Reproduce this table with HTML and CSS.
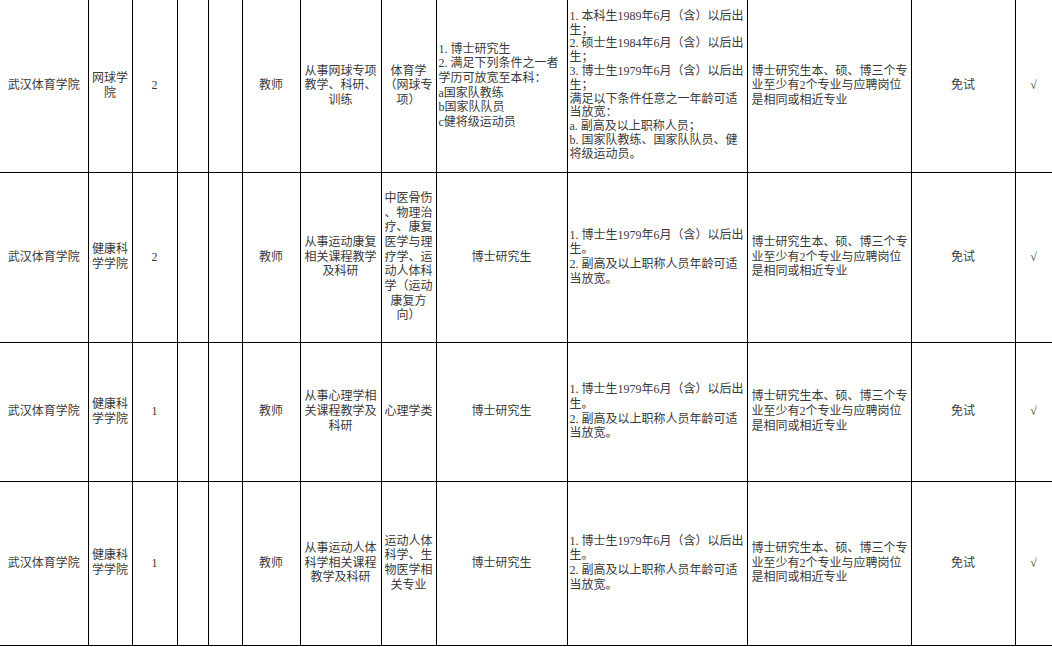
FILE: index.html
```html
<!DOCTYPE html>
<html lang="zh-CN">
<head>
<meta charset="utf-8">
<title>招聘岗位表</title>
<link rel="stylesheet" href="styles.css">
</head>
<body>
<table class="sheet">
  <colgroup>
    <col class="w88"><col class="w44"><col class="w45"><col class="w31"><col class="w34"><col class="w58"><col class="w81"><col class="w55"><col class="w131"><col class="w180"><col class="w164"><col class="w104"><col class="w37">
  </colgroup>
  <tbody>
    <tr class="r1">
      <td class="c first">武汉体育学院</td>
      <td class="c">网球学<br>院</td>
      <td class="c num">2</td>
      <td></td>
      <td></td>
      <td class="c">教师</td>
      <td class="c">从事网球专项<br>教学、科研、<br>训练</td>
      <td class="c">体育学<br>（网球专<br>项）</td>
      <td class="l">1. 博士研究生<br>2. 满足下列条件之一者<br>学历可放宽至本科：<br>a国家队教练<br>b国家队队员<br>c健将级运动员</td>
      <td class="l dense">1. 本科生1989年6月（含）以后出<br>生；<br>2. 硕士生1984年6月（含）以后出<br>生；<br>3. 博士生1979年6月（含）以后出<br>生；<br>满足以下条件任意之一年龄可适<br>当放宽：<br>a. 副高及以上职称人员；<br>b. 国家队教练、国家队队员、健<br>将级运动员。</td>
      <td class="l wide">博士研究生本、硕、博三个专<br>业至少有2个专业与应聘岗位<br>是相同或相近专业</td>
      <td class="c">免试</td>
      <td class="c last">√</td>
    </tr>
    <tr class="r2">
      <td class="c first">武汉体育学院</td>
      <td class="c">健康科<br>学学院</td>
      <td class="c num">2</td>
      <td></td>
      <td></td>
      <td class="c">教师</td>
      <td class="c">从事运动康复<br>相关课程教学<br>及科研</td>
      <td class="c">中医骨伤<br>、物理治<br>疗、康复<br>医学与理<br>疗学、运<br>动人体科<br>学（运动<br>康复方<br>向）</td>
      <td class="c">博士研究生</td>
      <td class="l">1. 博士生1979年6月（含）以后出<br>生。<br>2. 副高及以上职称人员年龄可适<br>当放宽。</td>
      <td class="l wide">博士研究生本、硕、博三个专<br>业至少有2个专业与应聘岗位<br>是相同或相近专业</td>
      <td class="c">免试</td>
      <td class="c last">√</td>
    </tr>
    <tr class="r3">
      <td class="c first">武汉体育学院</td>
      <td class="c">健康科<br>学学院</td>
      <td class="c num">1</td>
      <td></td>
      <td></td>
      <td class="c">教师</td>
      <td class="c">从事心理学相<br>关课程教学及<br>科研</td>
      <td class="c">心理学类</td>
      <td class="c">博士研究生</td>
      <td class="l">1. 博士生1979年6月（含）以后出<br>生。<br>2. 副高及以上职称人员年龄可适<br>当放宽。</td>
      <td class="l wide">博士研究生本、硕、博三个专<br>业至少有2个专业与应聘岗位<br>是相同或相近专业</td>
      <td class="c">免试</td>
      <td class="c last">√</td>
    </tr>
    <tr class="r4">
      <td class="c first">武汉体育学院</td>
      <td class="c">健康科<br>学学院</td>
      <td class="c num">1</td>
      <td></td>
      <td></td>
      <td class="c">教师</td>
      <td class="c">从事运动人体<br>科学相关课程<br>教学及科研</td>
      <td class="c">运动人体<br>科学、生<br>物医学相<br>关专业</td>
      <td class="c">博士研究生</td>
      <td class="l">1. 博士生1979年6月（含）以后出<br>生。<br>2. 副高及以上职称人员年龄可适<br>当放宽。</td>
      <td class="l wide">博士研究生本、硕、博三个专<br>业至少有2个专业与应聘岗位<br>是相同或相近专业</td>
      <td class="c">免试</td>
      <td class="c last">√</td>
    </tr>
  </tbody>
</table>
</body>
</html>
```

FILE: styles.css
```css
html, body {
  margin: 0;
  padding: 0;
  background: #ffffff;
}

body {
  width: 1052px;
  height: 647px;
  overflow: hidden;
}

.sheet {
  border-collapse: collapse;
  table-layout: fixed;
  width: 1052px;
  font-family: "Liberation Serif", "Noto Sans CJK SC", serif;
  font-size: 12px;
  line-height: 14.7px;
  color: #3a3a3a;
}

.w88 { width: 88px; }
.w44 { width: 44px; }
.w45 { width: 45px; }
.w31 { width: 31px; }
.w34 { width: 34px; }
.w58 { width: 58px; }
.w81 { width: 81px; }
.w55 { width: 55px; }
.w131 { width: 131px; }
.w180 { width: 180px; }
.w164 { width: 164px; }
.w104 { width: 104px; }
.w37 { width: 37px; }

.sheet td {
  border: 1px solid #000;
  padding: 0 1px;
  vertical-align: middle;
  white-space: nowrap;
  overflow: hidden;
}

.sheet tr.r1 td {
  border-top: none;
}

.sheet td.first {
  border-left: none;
}

.sheet td.c {
  text-align: center;
}

.sheet td.l {
  text-align: left;
  padding-left: 2px;
}

.sheet td.wide {
  padding-left: 4px;
}

.sheet td.dense {
  line-height: 13.8px;
}

.r1 { height: 172px; }
.r2 { height: 170px; }
.r3 { height: 139px; }
.r4 { height: 164px; }
```
